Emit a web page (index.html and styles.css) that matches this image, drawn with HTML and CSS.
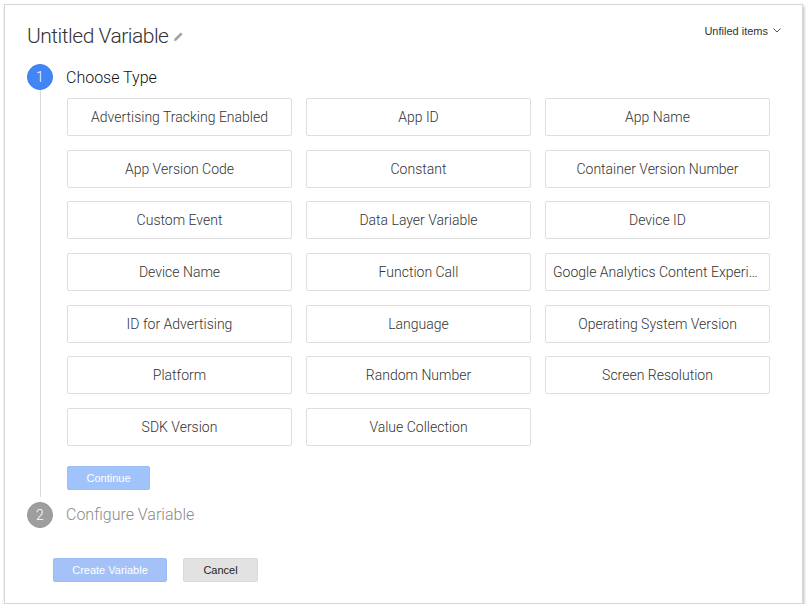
FILE: index.html
```html
<!DOCTYPE html>
<html>
<head>
<meta charset="utf-8">
<link rel="stylesheet" href="styles.css">
</head>
<body>
<div class="dialog">
  <div class="header">
    <div class="title">Untitled Variable
      <svg class="pencil" width="11" height="11" viewBox="0 0 11 11"><path d="M1 10 L1.6 7.6 L7.8 1.4 L9.6 3.2 L3.4 9.4 Z" fill="#a0a0a0"/></svg>
    </div>
    <div class="folder">Unfiled items
      <svg class="chev" width="8" height="5" viewBox="0 0 8 5"><path d="M0.5 0.5 L4 4 L7.5 0.5" fill="none" stroke="#555" stroke-width="1"/></svg>
    </div>
  </div>

  <div class="step">
    <div class="step-head">
      <div class="circle active">1</div>
      <div class="step-title">Choose Type</div>
    </div>
    <div class="step-body">
      <div class="grid">
        <div class="tile">Advertising Tracking Enabled</div>
        <div class="tile">App ID</div>
        <div class="tile">App Name</div>
        <div class="tile">App Version Code</div>
        <div class="tile">Constant</div>
        <div class="tile">Container Version Number</div>
        <div class="tile">Custom Event</div>
        <div class="tile">Data Layer Variable</div>
        <div class="tile">Device ID</div>
        <div class="tile">Device Name</div>
        <div class="tile">Function Call</div>
        <div class="tile">Google Analytics Content Experiment ID</div>
        <div class="tile">ID for Advertising</div>
        <div class="tile">Language</div>
        <div class="tile">Operating System Version</div>
        <div class="tile">Platform</div>
        <div class="tile">Random Number</div>
        <div class="tile">Screen Resolution</div>
        <div class="tile">SDK Version</div>
        <div class="tile">Value Collection</div>
      </div>
      <button class="btn continue">Continue</button>
    </div>
  </div>

  <div class="step step2">
    <div class="step-head">
      <div class="circle inactive">2</div>
      <div class="step-title muted">Configure Variable</div>
    </div>
  </div>

  <div class="footer">
    <button class="btn create">Create Variable</button>
    <button class="btn cancel">Cancel</button>
  </div>
</div>
</body>
</html>
```

FILE: styles.css
```css
html, body {
  margin: 0;
  padding: 0;
  background: #ffffff;
}
body {
  padding: 4px 5px 0 4px;
  font-family: Roboto, "Liberation Sans", sans-serif;
}
.dialog {
  box-sizing: border-box;
  width: 799px;
  height: 600px;
  border: 1px solid #d6d6d6;
  box-shadow: 1px 2px 3px rgba(0, 0, 0, 0.28);
  background: #fff;
  padding: 18px 0 0 22px;
}
.header {
  display: flex;
  justify-content: space-between;
  align-items: flex-start;
  padding-right: 21px;
}
.title {
  font-size: 21px;
  font-weight: 300;
  line-height: 26px;
  color: #333;
  display: flex;
  align-items: center;
  gap: 5px;
  letter-spacing: -0.5px;
}
.pencil {
  margin-top: 1px;
}
.folder {
  font-family: "Liberation Sans", Arial, sans-serif;
  font-size: 11px;
  color: #333;
  display: flex;
  align-items: center;
  gap: 5px;
  margin-top: 2px;
}
.chev {
  margin-top: -2px;
}
.step-head {
  display: flex;
  align-items: center;
  gap: 13px;
}
.step {
  margin-top: 15px;
}
.step2 {
  margin-top: 5px;
}
.circle {
  width: 26px;
  height: 26px;
  border-radius: 50%;
  color: #fff;
  font-size: 14px;
  font-weight: 300;
  display: flex;
  align-items: center;
  justify-content: center;
  box-sizing: border-box;
}
.circle.active {
  background: #4285f4;
  border: 1px solid #3b7de9;
}
.circle.inactive {
  background: #9e9e9e;
  border: 1px solid #959595;
}
.step-title {
  font-size: 16px;
  font-weight: 300;
  color: #111;
}
.step-title.muted {
  color: #8a8a8a;
}
.step-body {
  margin-left: 13px;
  border-left: 1px solid #d9d9d9;
  padding: 8px 0 7px 26px;
}
.grid {
  display: grid;
  grid-template-columns: repeat(3, 225px);
  column-gap: 14px;
  row-gap: 13.67px;
}
.tile {
  box-sizing: border-box;
  height: 38px;
  border: 1px solid #dedede;
  border-radius: 2px;
  font-size: 14px;
  font-weight: 300;
  color: #333;
  padding: 0 7px;
  white-space: nowrap;
  overflow: hidden;
  text-overflow: ellipsis;
  display: block;
  line-height: 36px;
  text-align: center;
}
.btn {
  font-family: "Liberation Sans", Arial, sans-serif;
  font-size: 11px;
  height: 24px;
  border-radius: 2px;
  box-sizing: border-box;
  padding: 0;
  cursor: pointer;
}
.continue {
  margin-top: 20px;
  width: 83px;
  background: #a1c3fb;
  border: 1px solid #9bbcf5;
  color: #fff;
  display: block;
}
.footer {
  display: flex;
  gap: 16px;
  margin: 30px 0 0 26px;
}
.create {
  width: 114px;
  background: #a4c2f8;
  border: 1px solid #9dbbf3;
  color: #fff;
}
.cancel {
  width: 75px;
  background: #e2e2e2;
  border: 1px solid #d9d9d9;
  color: #222;
}
```
